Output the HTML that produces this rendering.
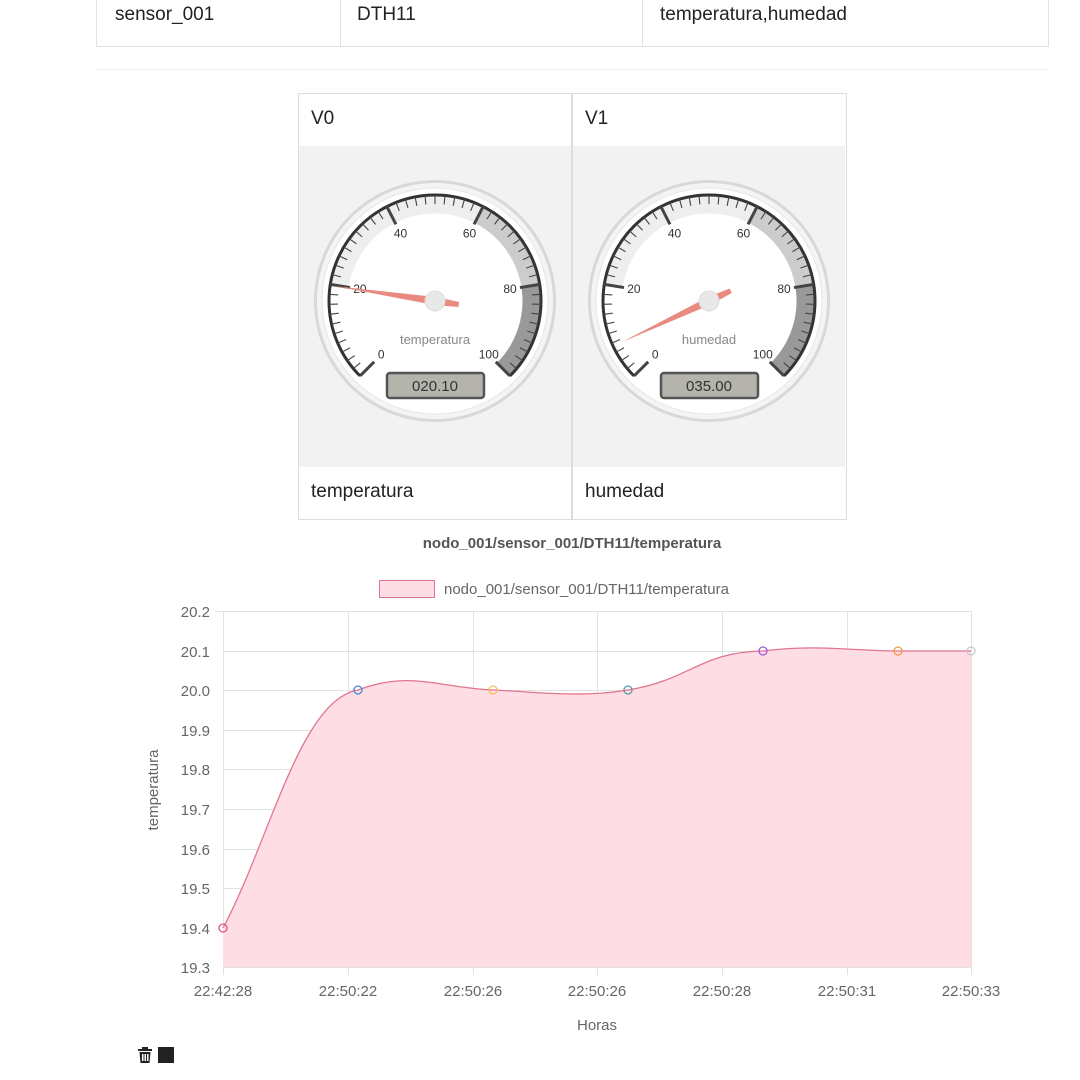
<!DOCTYPE html>
<html><head><meta charset="utf-8">
<style>
body{margin:0;width:1080px;height:1080px;background:#fff;font-family:"Liberation Sans",sans-serif;position:relative;overflow:hidden;color:#212529}
.abs{position:absolute}
.t{font-size:19px;color:#222}
</style></head><body>
<div class="abs" style="left:96px;top:-2px;width:951px;height:48px;border:1px solid #dee2e6;border-top:none"></div>
<div class="abs" style="left:340px;top:0;width:1px;height:46px;background:#dee2e6"></div>
<div class="abs" style="left:642px;top:0;width:1px;height:46px;background:#dee2e6"></div>
<div class="abs t" style="left:115px;top:4px">sensor_001</div>
<div class="abs t" style="left:357px;top:4px">DTH11</div>
<div class="abs t" style="left:660px;top:4px">temperatura,humedad</div>
<div class="abs" style="left:96px;top:69px;width:952px;height:1px;background:#eee"></div>

<div class="abs" style="left:298px;top:93px;width:272px;height:425px;border:1px solid #ddd"></div>
<div class="abs" style="left:572px;top:93px;width:273px;height:425px;border:1px solid #ddd"></div>
<div class="abs" style="left:299px;top:146px;width:272px;height:321px;background:#f2f2f2"></div>
<div class="abs" style="left:573px;top:146px;width:272px;height:321px;background:#f2f2f2"></div>
<div class="abs t" style="left:311px;top:108px">V0</div>
<div class="abs t" style="left:585px;top:108px">V1</div>
<div class="abs t" style="left:311px;top:481px">temperatura</div>
<div class="abs t" style="left:585px;top:481px">humedad</div>

<svg id="g" class="abs" style="left:0;top:0" width="1080" height="1080"></svg>

<div class="abs" style="left:0;width:1144px;top:535px;text-align:center;font-size:15px;font-weight:bold;color:#555">nodo_001/sensor_001/DTH11/temperatura</div>

<svg class="abs" style="left:0;top:0" width="1080" height="1080" font-family="Liberation Sans, sans-serif">
<rect x="379.5" y="580.5" width="55" height="17" fill="#ffdde4" stroke="#e07590"/>
<text x="444" y="594" font-size="15" fill="#666">nodo_001/sensor_001/DTH11/temperatura</text>
<g stroke="#e2e2e2" stroke-width="1">
<line x1="223" y1="611.5" x2="971" y2="611.5"/><line x1="223" y1="651.5" x2="971" y2="651.5"/><line x1="223" y1="690.5" x2="971" y2="690.5"/><line x1="223" y1="730.5" x2="971" y2="730.5"/><line x1="223" y1="769.5" x2="971" y2="769.5"/><line x1="223" y1="809.5" x2="971" y2="809.5"/><line x1="223" y1="849.5" x2="971" y2="849.5"/><line x1="223" y1="888.5" x2="971" y2="888.5"/><line x1="223" y1="928.5" x2="971" y2="928.5"/><line x1="223" y1="967.5" x2="971" y2="967.5"/>
<line x1="223.5" y1="611" x2="223.5" y2="975"/><line x1="348.5" y1="611" x2="348.5" y2="975"/><line x1="473.5" y1="611" x2="473.5" y2="975"/><line x1="597.5" y1="611" x2="597.5" y2="975"/><line x1="722.5" y1="611" x2="722.5" y2="975"/><line x1="847.5" y1="611" x2="847.5" y2="975"/><line x1="971.5" y1="611" x2="971.5" y2="975"/>
<line x1="215" y1="611.5" x2="223" y2="611.5"/>
</g>
<path d="M223,928 C270,840 300,700 358,690 C410,670 440,688 493,690 C540,692 580,698 628,690 C690,680 700,652 763,651 C820,644 850,651 898,651 C930,651 950,651 971,651 L971,967 L223,967 Z" fill="#ffdde4"/>
<path d="M223,928 C270,840 300,700 358,690 C410,670 440,688 493,690 C540,692 580,698 628,690 C690,680 700,652 763,651 C820,644 850,651 898,651 C930,651 950,651 971,651" fill="none" stroke="#e07590" stroke-width="1.3"/>
<g fill="none" stroke-width="1.3">
<circle cx="223" cy="928" r="4" stroke="#e0507a"/>
<circle cx="358" cy="690" r="4" stroke="#4a8ad8"/>
<circle cx="493" cy="690" r="4" stroke="#f5c05a"/>
<circle cx="628" cy="690" r="4" stroke="#5a9aa8"/>
<circle cx="763" cy="651" r="4" stroke="#9a5ae0"/>
<circle cx="898" cy="651" r="4" stroke="#f09a40"/>
<circle cx="971" cy="651" r="4" stroke="#c8c8c8"/>
</g>
<g font-size="15" fill="#666" text-anchor="end">
<text x="210" y="617">20.2</text><text x="210" y="657">20.1</text><text x="210" y="696">20.0</text><text x="210" y="736">19.9</text><text x="210" y="775">19.8</text><text x="210" y="815">19.7</text><text x="210" y="855">19.6</text><text x="210" y="894">19.5</text><text x="210" y="934">19.4</text><text x="210" y="973">19.3</text>
</g>
<g font-size="15" fill="#666" text-anchor="middle">
<text x="223" y="996">22:42:28</text><text x="348" y="996">22:50:22</text><text x="473" y="996">22:50:26</text><text x="597" y="996">22:50:26</text><text x="722" y="996">22:50:28</text><text x="847" y="996">22:50:31</text><text x="971" y="996">22:50:33</text>
<text x="597" y="1030">Horas</text>
<text transform="translate(158,790) rotate(-90)">temperatura</text>
</g>
<g fill="#222">
<rect x="138" y="1049" width="14" height="2"/><rect x="142" y="1047" width="6" height="2"/>
<path d="M139.5,1052 h11 l-1,11 h-9 z M142,1054 v7 h1.5 v-7z M144.5,1054 v7 h1.5 v-7z M147,1054 v7 h1.5 v-7z" fill-rule="evenodd"/>
<rect x="158" y="1047" width="16" height="16"/>
</g>
</svg>

<script>
var g=document.getElementById('g'),h='';
function P(cx,cy,r,a){var t=a*Math.PI/180;return [cx+r*Math.sin(t),cy-r*Math.cos(t)];}
function ang(v){return -135+2.7*v;}
function arc(cx,cy,r,v1,v2){var a=P(cx,cy,r,ang(v1)),b=P(cx,cy,r,ang(v2));var l=(ang(v2)-ang(v1))>180?1:0;return 'M'+a[0]+','+a[1]+' A'+r+','+r+' 0 '+l+' 1 '+b[0]+','+b[1];}
function gauge(cx,cy,label,val,tipx,tipy){
h+='<circle cx="'+cx+'" cy="'+cy+'" r="121" fill="#d8d8d8"/>';
h+='<circle cx="'+cx+'" cy="'+cy+'" r="118" fill="#f4f4f4"/>';
h+='<circle cx="'+cx+'" cy="'+cy+'" r="113" fill="#fff" stroke="#e6e6e6" stroke-width="1"/>';
h+='<path d="'+arc(cx,cy,97,20,60)+'" stroke="#eeeeee" stroke-width="19" fill="none"/>';
h+='<path d="'+arc(cx,cy,97,60,80)+'" stroke="#cccccc" stroke-width="19" fill="none"/>';
h+='<path d="'+arc(cx,cy,97,80,100)+'" stroke="#999999" stroke-width="19" fill="none"/>';
h+='<path d="'+arc(cx,cy,106,0,100)+'" stroke="#333" stroke-width="3" fill="none"/>';
for(var v=0;v<=100;v+=2){var maj=v%20==0;var a=P(cx,cy,106,ang(v)),b=P(cx,cy,maj?86:97,ang(v));
h+='<line x1="'+a[0]+'" y1="'+a[1]+'" x2="'+b[0]+'" y2="'+b[1]+'" stroke="#444" stroke-width="'+(maj?3:1.1)+'"/>';}
for(var v=0;v<=100;v+=20){var p=P(cx,cy,76,ang(v));
h+='<text x="'+p[0]+'" y="'+(p[1]+4)+'" font-size="12" fill="#333" text-anchor="middle" font-family="Liberation Sans">'+v+'</text>';}
h+='<text x="'+cx+'" y="'+(cy+43)+'" font-size="13" fill="#888" text-anchor="middle" font-family="Liberation Sans">'+label+'</text>';
h+='<rect x="'+(cx-48)+'" y="'+(cy+72)+'" width="97" height="25" rx="3" fill="#b4b4ac" stroke="#555" stroke-width="2.5"/>';
h+='<text x="'+cx+'" y="'+(cy+90)+'" font-size="15" fill="#333" text-anchor="middle" font-family="Liberation Sans">'+val+'</text>';
var dx=tipx-cx,dy=tipy-cy,L=Math.sqrt(dx*dx+dy*dy),ux=dx/L,uy=dy/L,nx=-uy,ny=ux,tx=cx-ux*24,ty=cy-uy*24;
h+='<polygon points="'+tipx+','+tipy+' '+(cx+nx*4)+','+(cy+ny*4)+' '+(tx+nx*2.5)+','+(ty+ny*2.5)+' '+(tx-nx*2.5)+','+(ty-ny*2.5)+' '+(cx-nx*4)+','+(cy-ny*4)+'" fill="#e88a80"/>';
h+='<circle cx="'+cx+'" cy="'+cy+'" r="10" fill="#e8e8e8" stroke="#ddd"/>';
}
gauge(435,301,'temperatura','020.10',334,286);
gauge(709,301,'humedad','035.00',622,342);
g.innerHTML=h;
</script>
</body></html>
